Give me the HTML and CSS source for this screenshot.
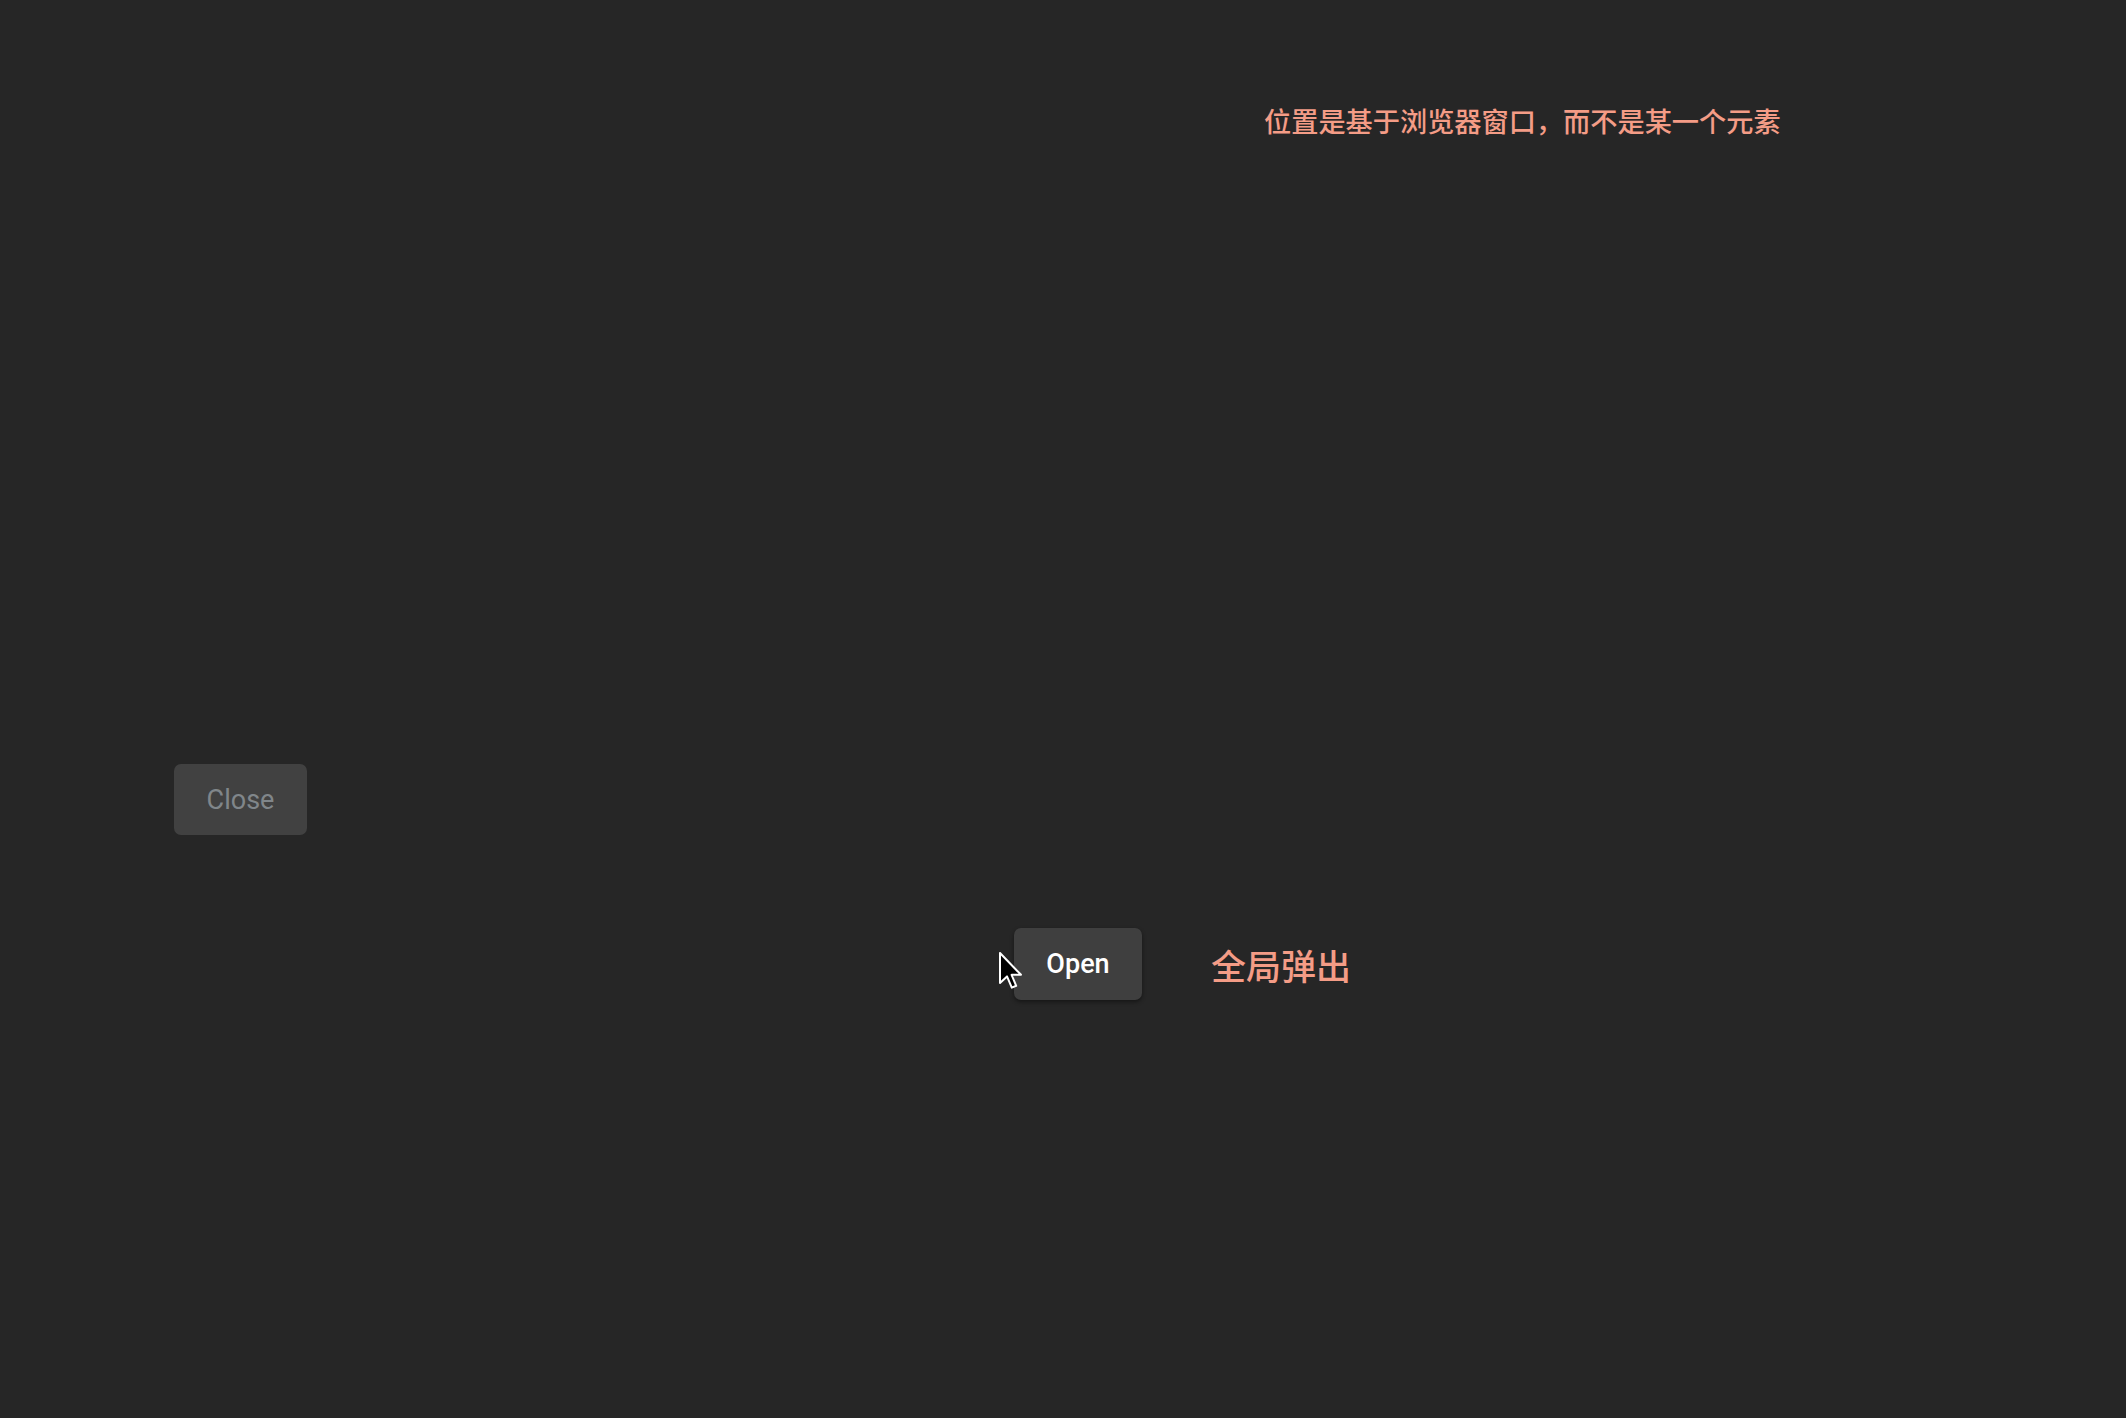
FILE: index.html
```html
<!DOCTYPE html>
<html>

<head>
    <title>Popup</title>
    <link rel="stylesheet" href="styles.css">
</head>

<body>
    <p class="hint">位置是基于浏览器窗口，而不是某一个元素</p>

    <div class="popup">
        <button class="btn btn-close" disabled>Close</button>
    </div>

    <div class="row">
        <div class="trigger">
            <svg class="cursor" width="24" height="38" viewBox="0 0 12 19">
                <path d="M0.5 0.5 L0.5 15.5 L4 12.2 L6.4 17.8 L8.6 16.9 L6.3 11.4 L11 11.4 Z"
                    fill="#000" stroke="#fff" stroke-width="1" stroke-linejoin="round" />
            </svg>
            <button class="btn btn-open">Open</button>
        </div>
        <span class="label">全局弹出</span>
    </div>
</body>

</html>
```

FILE: styles.css
```css
body {
    margin: 0;
    height: 1418px;
    background-color: #262626;
    font-family: Roboto, "Noto Sans CJK SC", sans-serif;
    overflow: hidden;
}

.hint {
    margin: 0;
    padding: 100px 0 0 1264px;
    font-family: "Noto Sans CJK SC", sans-serif;
    font-size: 27.2px;
    line-height: 40px;
    font-weight: 500;
    color: #f49c86;
}

.popup {
    padding: 624px 0 0 174px;
}

.btn {
    border: none;
    border-radius: 7px;
    font-family: Roboto, sans-serif;
    font-size: 27px;
    height: 71px;
    padding: 0 30px;
}

.btn-close {
    width: 133px;
    background-color: #414141;
    color: #80868a;
    font-weight: 400;
}

.btn-open {
    width: 128px;
    height: 72px;
    background-color: #3f3f3f;
    color: #fff;
    font-weight: 500;
    box-shadow: 0 2px 4px rgba(0, 0, 0, 0.45);
}

.row {
    display: flex;
    align-items: center;
    gap: 69px;
    padding: 93px 0 0 1014px;
}

.trigger {
    position: relative;
}

.cursor {
    position: absolute;
    left: -15px;
    top: 24px;
    z-index: 1;
}

.label {
    font-family: "Noto Sans CJK SC", sans-serif;
    font-size: 35px;
    font-weight: 500;
    color: #f49c86;
}
```
